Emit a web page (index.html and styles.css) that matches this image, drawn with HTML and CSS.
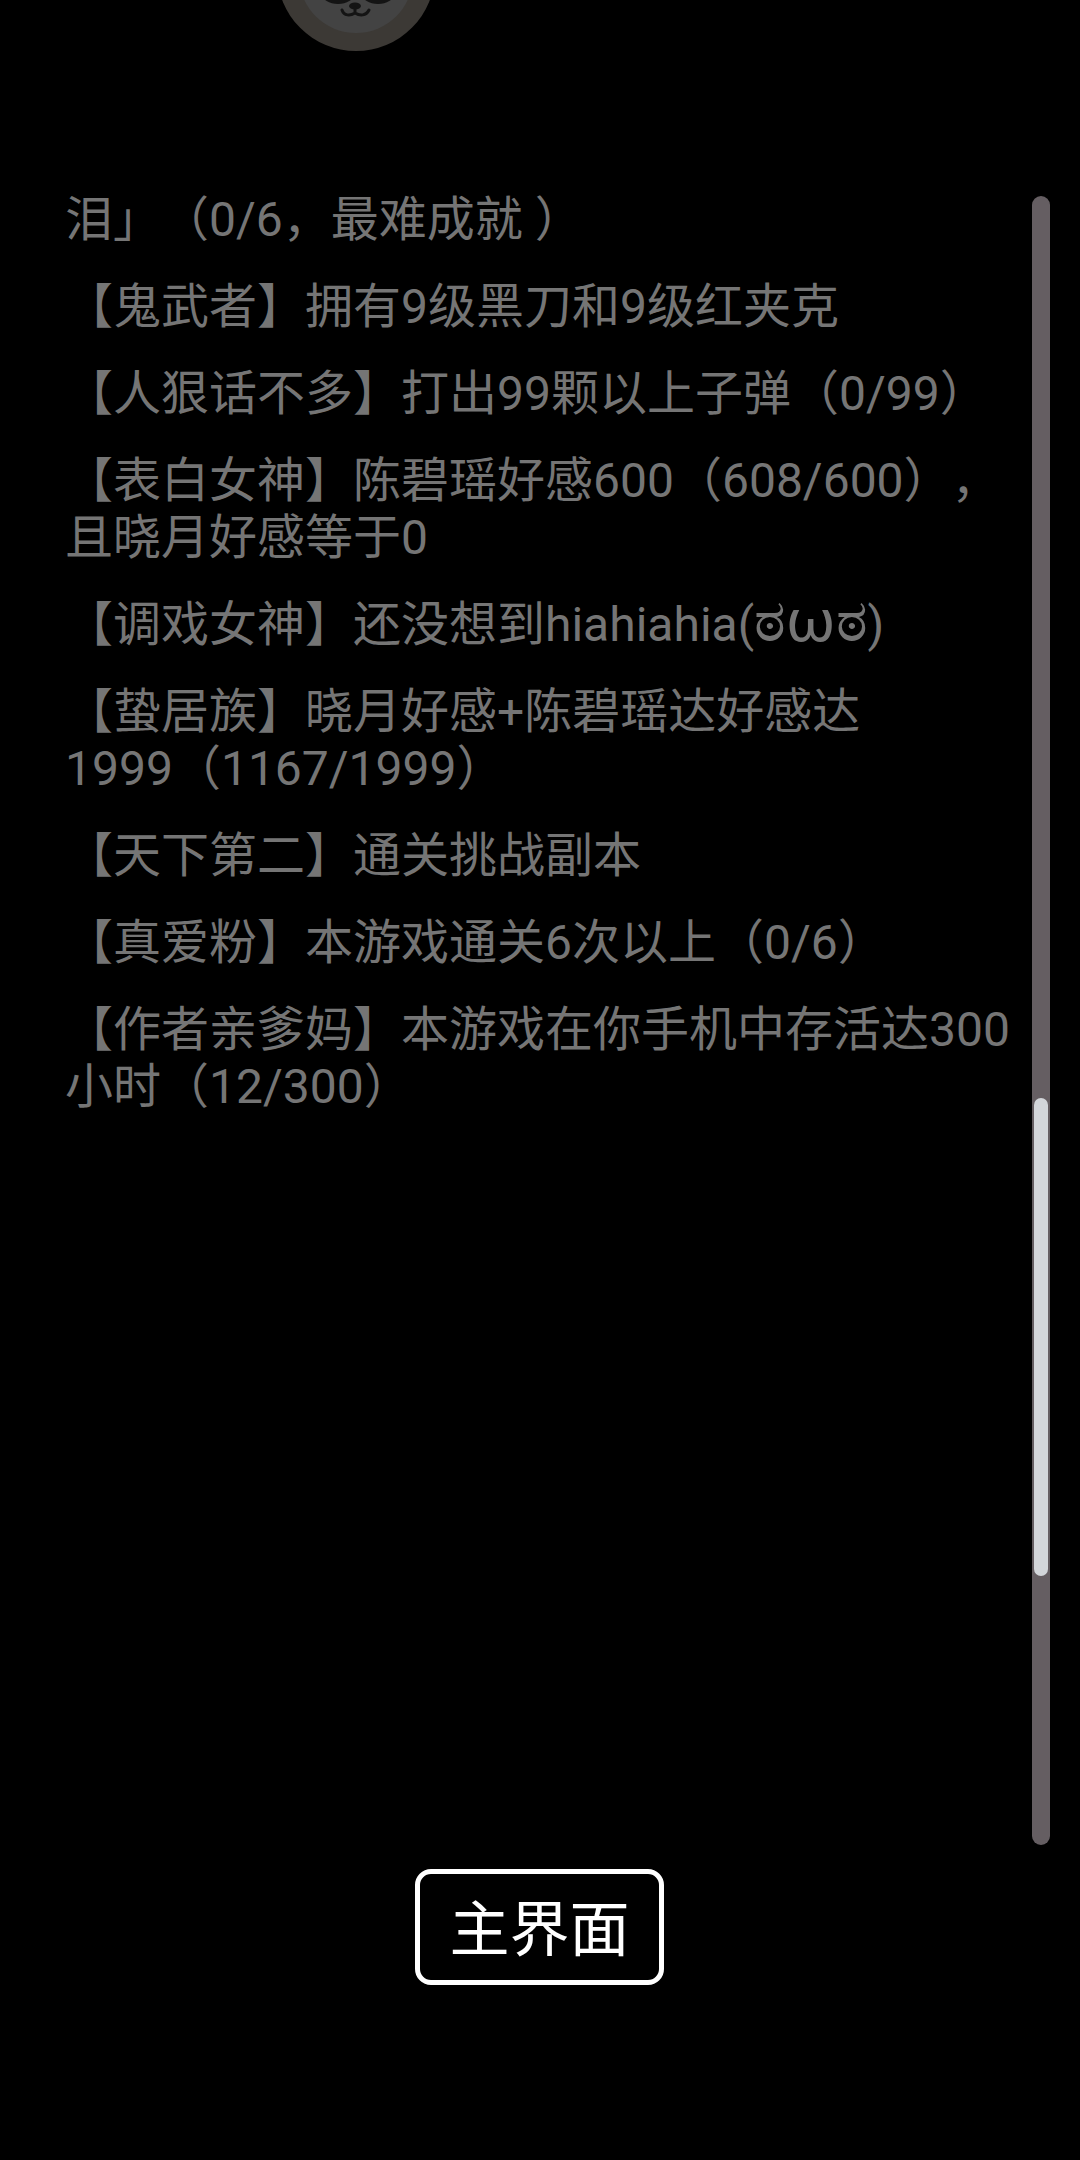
FILE: index.html
```html
<!DOCTYPE html>
<html lang="zh-CN">
<head>
    <meta charset="UTF-8">
    <meta name="viewport" content="width=device-width, initial-scale=1.0">
    <title>成就</title>
    <link rel="stylesheet" href="styles.css">
</head>
<body>
    <div class="screen">
        <!-- panda avatar, mostly scrolled off the top -->
        <svg class="avatar" width="160" height="51" viewBox="0 0 160 51">
            <circle cx="80" cy="-28" r="79" fill="#3c3935"/>
            <circle cx="80" cy="-24" r="57" fill="#434343"/>
            <ellipse cx="62" cy="-6" rx="16" ry="10" fill="#141414"/>
            <ellipse cx="102" cy="-6" rx="16" ry="10" fill="#141414"/>
            <ellipse cx="79" cy="6" rx="6" ry="3.5" fill="#141414"/>
            <path d="M79 8v4M66 10c2 6 8 6 13 3c5 3 11 3 14-3" fill="none" stroke="#141414" stroke-width="3" stroke-linecap="round"/>
        </svg>

        <div class="list">
            <p>泪」（0/6，最难成就 ）</p>
            <p>【鬼武者】拥有9级黑刀和9级红夹克</p>
            <p>【人狠话不多】打出99颗以上子弹（0/99）</p>
            <p>【表白女神】陈碧瑶好感600（608/600），且晓月好感等于0</p>
            <p>【调戏女神】还没想到hiahiahia(<span class="face">ಠωಠ</span>)</p>
            <p>【蛰居族】晓月好感+陈碧瑶达好感达<span class="keep">1999（1167/1999）</span></p>
            <p>【天下第二】通关挑战副本</p>
            <p>【真爱粉】本游戏通关6次以上（0/6）</p>
            <p>【作者亲爹妈】本游戏在你手机中存活达300小时（12/300）</p>
        </div>

        <div class="scrollbar"><div class="scrollbar-thumb"></div></div>

        <div class="actions">
            <button class="main-button">主界面</button>
        </div>
    </div>
</body>
</html>
```

FILE: styles.css
```css
body {
    margin: 0;
    background-color: #000;
    font-family: Roboto, "Noto Sans CJK SC", "Noto Sans", sans-serif;
}

.screen {
    position: relative;
    height: 2160px;
    overflow: hidden;
    display: flex;
    flex-direction: column;
}

.avatar {
    display: block;
    margin-left: 276px;
    flex: none;
}

/* achievement list */
.list {
    flex: none;
    height: 1678px;
    margin-top: 140px;
    padding-left: 65px;
    width: 950px;
    color: #757575;
    font-size: 48px;
    line-height: 57px;
    text-spacing-trim: space-all;
}

.list p {
    margin: 0 0 30px;
}

.keep {
    white-space: nowrap;
}

/* the kaomoji falls back to a smaller font, so it is sized up on its own */
.face {
    display: inline-block;
    height: 40px;
    font-size: 60px;
    line-height: 40px;
}

/* overlay scrollbar on the right edge */
.scrollbar {
    position: absolute;
    top: 196px;
    left: 1032px;
    width: 18px;
    height: 1649px;
    border-radius: 9px;
    background-color: #655e62;
}

.scrollbar-thumb {
    position: absolute;
    top: 902px;
    left: 2px;
    width: 14px;
    height: 478px;
    border-radius: 7px;
    background-color: #d3d6da;
}

.actions {
    display: flex;
    justify-content: center;
}

.main-button {
    width: 249px;
    height: 116px;
    margin-right: 1px;
    padding: 0 0 6px;
    border: 5px solid #fff;
    border-radius: 16px;
    background-color: #000;
    color: #fff;
    font-family: inherit;
    font-size: 60px;
}
```
